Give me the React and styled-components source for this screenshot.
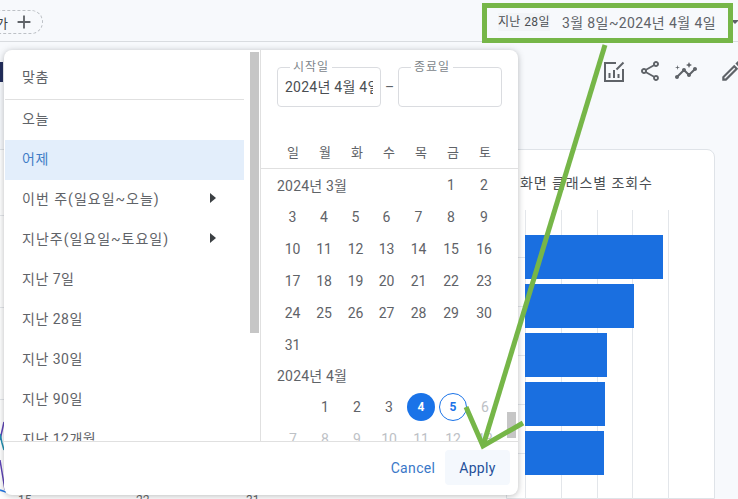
import React from "react";
import styled, { createGlobalStyle } from "styled-components";
import { MdAdd, MdOutlineShare, MdInsights, MdOutlineEdit } from "react-icons/md";

const Global = createGlobalStyle`
  html, body { margin: 0; padding: 0; background: #f7f9fc; }
  body { font-family: Roboto, "Noto Sans CJK KR", sans-serif; color: #5f6368; }
  * { box-sizing: border-box; }
`;

const Page = styled.div`
  position: relative;
  width: 738px;
  height: 499px;
  overflow: hidden;
  background: #f7f9fc;
`;

const TopBar = styled.header`
  height: 42px;
  display: flex;
  align-items: flex-start;
  justify-content: space-between;
  border-bottom: 1px solid #d9dce0;
`;

const AddPill = styled.div`
  margin: 10px 0 0 -30px;
  width: 73px;
  height: 24px;
  display: flex;
  align-items: center;
  justify-content: flex-end;
  gap: 5px;
  padding-right: 7px;
  border: 1px dashed #bdc1c6;
  border-radius: 12px;
  font-size: 13px;
  color: #3c4043;
`;

const DateRange = styled.div`
  display: flex;
  align-items: center;
  height: 22px;
  margin-top: 11px;
`;

const RangeChip = styled.span`
  font-size: 12px;
  line-height: 18px;
  color: #4a4e52;
  background: #f2f4f7;
  margin-right: 12px;
  letter-spacing: 0.4px;
`;

const RangeText = styled.span`
  font-size: 14px;
  color: #5f6368;
  letter-spacing: 0.4px;
`;

const Caret = styled.span`
  width: 0;
  height: 0;
  margin: 0 -1px 0 15px;
  border-left: 4px solid transparent;
  border-right: 4px solid transparent;
  border-top: 4px solid #5f6368;
`;

const Toolbar = styled.div`
  height: 107px;
  display: flex;
  justify-content: space-between;
  align-items: flex-start;
  padding-top: 16px;
`;

const TitleMark = styled.span`
  width: 3px;
  height: 20px;
  margin-top: 4px;
  background: #1f2a5a;
`;

const ActionIcons = styled.div`
  display: flex;
  align-items: center;
  margin-right: -7px;
  color: #5f6368;
  gap: 12px;
`;

const PencilGap = styled.span`
  display: flex;
  margin-left: 9px;
`;

const Cards = styled.div`
  display: flex;
  height: 350px;
  padding-right: 24px;
`;

const TrendCard = styled.section`
  width: 506px;
  height: 100%;
  background: #fff;
  border-top: 1px solid #dfe3e8;
  font-size: 12px;
`;

const BarCard = styled.section`
  flex: 1;
  height: 100%;
  background: #fff;
  border: 1px solid #dfe3e8;
  border-radius: 8px 8px 0 0;
`;

const CardTitle = styled.h3`
  margin: 23px 0 0 13px;
  font-size: 14px;
  font-weight: 400;
  line-height: 20px;
  letter-spacing: 0.9px;
  color: #4a4e52;
  white-space: nowrap;
`;

const BarChart = styled.svg`
  display: block;
  margin-top: 17px;
`;

const TrendChart = styled.svg`
  display: block;
`;

const Popover = styled.div`
  position: absolute;
  left: 4px;
  top: 50px;
  width: 514px;
  height: 445px;
  display: flex;
  flex-direction: column;
  background: #fff;
  border-radius: 8px;
  box-shadow: 0 1px 6px rgba(60, 64, 67, 0.35);
  overflow: hidden;
`;

const PopoverBody = styled.div`
  flex: 1;
  min-height: 0;
  display: flex;
  overflow: hidden;
`;

const Presets = styled.div`
  position: relative;
  width: 257px;
  flex: none;
  padding: 8px 0 0 1px;
  border-right: 1px solid #e0e0e0;
`;

const PresetRow = styled.div`
  width: 239px;
  height: 40px;
  flex: none;
  display: flex;
  align-items: center;
  justify-content: space-between;
  padding: 0 28px 4px 17px;
  font-size: 14px;
  letter-spacing: ${(p) => (p.$more ? "1px" : "0.5px")};
  white-space: nowrap;
  color: ${(p) => (p.$active ? "#3f7cc6" : "#5f6368")};
  background: ${(p) => (p.$active ? "#e3eefb" : "transparent")};
`;

const PresetDivider = styled.div`
  width: 239px;
  height: 2px;
  border-bottom: 1px solid #e0e0e0;
`;

const Triangle = styled.span`
  width: 0;
  height: 0;
  border-top: 5px solid transparent;
  border-bottom: 5px solid transparent;
  border-left: 6px solid #3c4043;
`;

const Thumb = styled.div`
  position: absolute;
  background: #c6c6c6;
  left: ${(p) => p.$left}px;
  top: ${(p) => p.$top}px;
  width: 9px;
  height: ${(p) => p.$height}px;
`;

const CalendarPane = styled.div`
  position: relative;
  flex: 1;
  min-width: 0;
`;

const Fields = styled.div`
  display: flex;
  align-items: flex-end;
  margin: 10px 0 0 16px;
`;

const Field = styled.fieldset`
  width: 104px;
  height: 47px;
  margin: 0;
  padding: 0 7px;
  border: 1px solid #dadce0;
  border-radius: 4px;
`;

const FieldLabel = styled.legend`
  margin-left: 5px;
  padding: 0 3px;
  font-size: 12px;
  line-height: 14px;
  color: #80868b;
  letter-spacing: 0.9px;
`;

const FieldValue = styled.div`
  width: 88px;
  height: 22px;
  margin-top: 2px;
  overflow: hidden;
  white-space: nowrap;
  font-size: 14px;
  line-height: 22px;
  color: #4a4e52;
  letter-spacing: 0.25px;
`;

const Dash = styled.span`
  width: 17px;
  height: 40px;
  text-align: center;
  line-height: 40px;
  font-size: 14px;
  color: #5f6368;
`;

const Weekdays = styled.div`
  display: grid;
  grid-template-columns: repeat(7, 32px);
  height: 33px;
  margin-top: 29px;
  padding: 0 0 2px 16px;
  align-items: center;
  border-bottom: 1px solid #e0e0e0;
  font-size: 13px;
  text-align: center;
  color: #5f6368;
`;

const DayGrid = styled.div`
  display: grid;
  grid-template-columns: ${(p) => p.$cols};
  grid-auto-rows: 32px;
  padding-left: 16px;
  align-items: center;
  justify-items: center;
  font-size: 14px;
  color: #5f6368;
`;

const MonthLabel = styled.div`
  font-size: 14px;
  color: #5f6368;
  letter-spacing: 0.2px;
  white-space: nowrap;
  ${(p) => (p.$inGrid ? "grid-column: span 5; justify-self: start;" : "height: 30px; line-height: 30px; padding-left: 16px;")}
`;

const Day = styled.span`
  width: 28px;
  height: 28px;
  display: flex;
  align-items: center;
  justify-content: center;
  border-radius: 50%;
  font-weight: ${(p) => (p.$kind === "start" || p.$kind === "next" ? 700 : 400)};
  font-size: ${(p) => (p.$kind === "start" || p.$kind === "next" ? "12px" : "14px")};
  color: ${(p) =>
    p.$kind === "start" ? "#fff" : p.$kind === "next" ? "#1a73e8" : p.$kind === "off" ? "#bdc1c6" : "#5f6368"};
  background: ${(p) => (p.$kind === "start" ? "#1a73e8" : "transparent")};
  border: ${(p) => (p.$kind === "next" ? "1px solid #1a73e8" : "0")};
`;

const Footer = styled.footer`
  height: 54px;
  flex: none;
  display: flex;
  align-items: center;
  justify-content: flex-end;
  gap: 9px;
  padding: 0 8px 2px 0;
  border-top: 1px solid #e0e0e0;
`;

const FooterButton = styled.button`
  height: 35px;
  padding: 0;
  width: ${(p) => (p.$primary ? "65px" : "46px")};
  border: 0;
  border-radius: 4px;
  font: 400 14px Roboto, sans-serif;
  letter-spacing: 0.35px;
  color: ${(p) => (p.$primary ? "#24509a" : "#3a78c8")};
  background: ${(p) => (p.$primary ? "#f4f8fd" : "transparent")};
`;

const Annotation = styled.svg`
  position: absolute;
  left: 0;
  top: 0;
  pointer-events: none;
`;

const ReportIcon = () => (
  <svg width="24" height="24" viewBox="0 0 24 24" fill="none" stroke="#5f6368" strokeWidth="2">
    <path d="M14 4H3v18h18V10" />
    <path d="M7.500 19v-5M12 19V11M16.500 19v-4" />
    <path d="M14.500 10.500l7-7" />
  </svg>
);

const march = [
  [3, 4, 5, 6, 7, 8, 9],
  [10, 11, 12, 13, 14, 15, 16],
  [17, 18, 19, 20, 21, 22, 23],
  [24, 25, 26, 27, 28, 29, 30],
  [31],
].flat();

const presets = [
  { label: "오늘" },
  { label: "어제", active: true },
  { label: "이번 주(일요일~오늘)", more: true },
  { label: "지난주(일요일~토요일)", more: true },
  { label: "지난 7일" },
  { label: "지난 28일" },
  { label: "지난 30일" },
  { label: "지난 90일" },
  { label: "지난 12개월" },
];

const bars = [138, 109, 82, 80, 79];

export default function App() {
  return (
    <Page>
      <Global />
      <TopBar>
        <AddPill>
          가 <MdAdd size={22} color="#5f6368" />
        </AddPill>
        <DateRange>
          <RangeChip>지난 28일</RangeChip>
          <RangeText>3월 8일~2024년 4월 4일</RangeText>
          <Caret />
        </DateRange>
      </TopBar>
      <Toolbar>
        <TitleMark />
        <ActionIcons>
          <ReportIcon />
          <MdOutlineShare size={24} />
          <MdInsights size={24} />
          <PencilGap>
            <MdOutlineEdit size={26} />
          </PencilGap>
        </ActionIcons>
      </Toolbar>
      <Cards>
        <TrendCard>
          <TrendChart width="506" height="349" viewBox="0 0 506 349">
            <g stroke="#e3e6ea">
              <line x1="0" x2="506" y1="65.5" y2="65.5" />
              <line x1="0" x2="506" y1="157.5" y2="157.5" />
              <line x1="0" x2="506" y1="249.5" y2="249.5" />
              <line x1="0" x2="506" y1="341.5" y2="341.5" />
            </g>
            <polyline points="0,290 4,272" fill="none" stroke="#5b3fb5" strokeWidth="1.5" />
            <polyline points="0,284 2,293 4,300" fill="none" stroke="#1d8fb0" strokeWidth="1.5" />
            <polyline points="0,310 5,340" fill="none" stroke="#5b3fb5" strokeWidth="1.5" />
            <polyline points="0,340 6,342" fill="none" stroke="#1a73e8" strokeWidth="1.5" />
            <g fill="#5f6368" fontSize="12">
              <text x="18" y="354">15</text>
              <text x="136" y="354">22</text>
              <text x="246" y="354">31</text>
            </g>
          </TrendChart>
        </TrendCard>
        <BarCard>
          <CardTitle>화면 클래스별 조회수</CardTitle>
          <BarChart width="207" height="290" viewBox="0 0 207 290">
            <g stroke="#e3e6ea" strokeWidth="1">
              {[18.5, 54.5, 90.5, 125.5, 161.5].map((x) => (
                <line key={x} x1={x} x2={x} y1="0" y2="290" />
              ))}
              {[47.5, 96.5, 145.5, 194.5, 243.5].map((y) => (
                <line key={y} x1="11" x2="18" y1={y} y2={y} />
              ))}
            </g>
            {bars.map((w, i) => (
              <rect key={w} x="18" y={25 + i * 49} width={w} height="44" fill="#1a6fe0" />
            ))}
          </BarChart>
        </BarCard>
      </Cards>

      <Popover>
        <PopoverBody>
          <Presets>
            <PresetRow>맞춤</PresetRow>
            <PresetDivider />
            {presets.map((p) => (
              <PresetRow key={p.label} $active={p.active} $more={p.more}>
                {p.label}
                {p.more && <Triangle />}
              </PresetRow>
            ))}
            <Thumb $left={246} $top={2} $height={281} />
          </Presets>
          <CalendarPane>
            <Fields>
              <Field>
                <FieldLabel>시작일</FieldLabel>
                <FieldValue>2024년 4월 4일</FieldValue>
              </Field>
              <Dash>–</Dash>
              <Field>
                <FieldLabel>종료일</FieldLabel>
              </Field>
            </Fields>
            <Weekdays>
              {["일", "월", "화", "수", "목", "금", "토"].map((d) => (
                <span key={d}>{d}</span>
              ))}
            </Weekdays>
            <DayGrid $cols="31px 32px 31px 31px 33px 32px 34px">
              <MonthLabel $inGrid>2024년 3월</MonthLabel>
              <Day>1</Day>
              <Day>2</Day>
              {march.map((d) => (
                <Day key={d}>{d}</Day>
              ))}
            </DayGrid>
            <MonthLabel>2024년 4월</MonthLabel>
            <DayGrid $cols="repeat(7, 32px)">
              <span />
              <Day>1</Day>
              <Day>2</Day>
              <Day>3</Day>
              <Day $kind="start">4</Day>
              <Day $kind="next">5</Day>
              <Day $kind="off">6</Day>
              {[7, 8, 9, 10, 11, 12, 13].map((d) => (
                <Day key={d} $kind="off">{d}</Day>
              ))}
            </DayGrid>
            <Thumb $left={246} $top={362} $height={26} />
          </CalendarPane>
        </PopoverBody>
        <Footer>
          <FooterButton>Cancel</FooterButton>
          <FooterButton $primary>Apply</FooterButton>
        </Footer>
      </Popover>

      <Annotation width="738" height="499" viewBox="0 0 738 499">
        <g fill="none" stroke="#76b648" strokeWidth="5">
          <rect x="484.500" y="5.500" width="246" height="35" />
          <path d="M605 45 L483 446" />
          <path d="M466 407 L483 446 L523 423" />
        </g>
      </Annotation>
    </Page>
  );
}
